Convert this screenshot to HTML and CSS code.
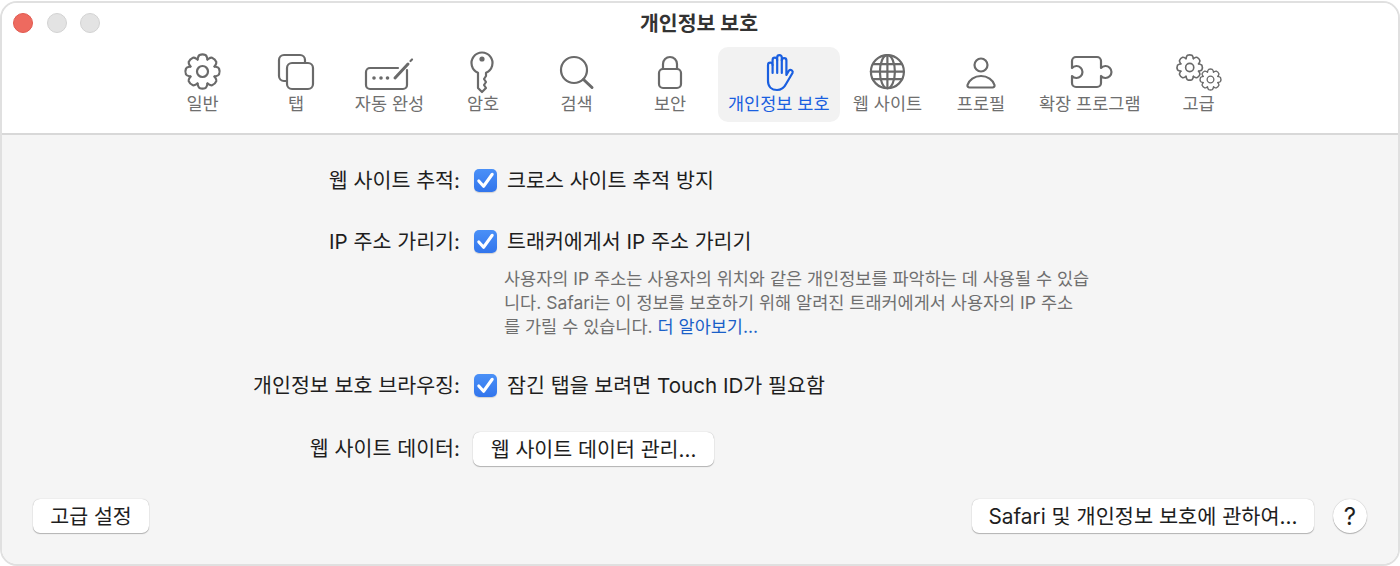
FILE: index.html
```html
<!DOCTYPE html>
<html lang="ko">
<head>
  <meta charset="UTF-8" />
  <meta name="viewport" content="width=device-width, initial-scale=1" />
  <title>개인정보 보호</title>
  <link rel="stylesheet" href="styles.css">
</head>
<body>

  <svg class="svg-defs" width="0" height="0" aria-hidden="true">
    <defs>
      <path id="tooth" d="M-5 -12C-4.5 -14 -4.5 -15.5 -3 -16.5Q0 -17.8 3 -16.5C4.5 -15.5 4.5 -14 5 -12" />
      <g id="gear">
        <use href="#tooth" />
        <use href="#tooth" transform="rotate(45)" />
        <use href="#tooth" transform="rotate(90)" />
        <use href="#tooth" transform="rotate(135)" />
        <use href="#tooth" transform="rotate(180)" />
        <use href="#tooth" transform="rotate(225)" />
        <use href="#tooth" transform="rotate(270)" />
        <use href="#tooth" transform="rotate(315)" />
        <circle r="5.5" />
      </g>
    </defs>
  </svg>

  <div class="window">
    <header class="toolbar">
      <div class="titlebar">
        <div class="lights">
          <span class="light light-red"></span>
          <span class="light"></span>
          <span class="light"></span>
        </div>
        <h1>개인정보 보호</h1>
      </div>

      <nav class="tabs">
        <a class="tab">
          <svg class="icon" viewBox="-30 -22 60 44"><use href="#gear" transform="translate(-.5 -.5)" /></svg>
          <span>일반</span>
        </a>
        <a class="tab">
          <svg class="icon" viewBox="-30 -22 60 44">
            <rect x="-9" y="-9" width="26" height="26" rx="5" />
            <path d="M9 -9V-12a5 5 0 0 0 -5 -5H-12a5 5 0 0 0 -5 5V4a5 5 0 0 0 5 5H-9" />
          </svg>
          <span>탭</span>
        </a>
        <a class="tab">
          <svg class="icon" viewBox="-30 -22 60 44">
            <path d="M8 -4H-20a4 4 0 0 0 -4 4V13a4 4 0 0 0 4 4H13a4 4 0 0 0 4 -4V-2" />
            <path class="thick" d="M5 6L18 -8" />
            <path d="M20.5 -11L22 -12.5" />
            <circle class="dot" cx="-16" cy="6" r="1.8" />
            <circle class="dot" cx="-9" cy="6" r="1.8" />
            <circle class="dot" cx="-2.5" cy="6" r="1.8" />
          </svg>
          <span>자동 완성</span>
        </a>
        <a class="tab">
          <svg class="icon" viewBox="-30 -22 60 44">
            <path d="M-5 .7V16L-1 20L3 16L1 13L3 10L1 7L3 4V.7A10.5 10.5 0 1 0 -5 .7Z" />
            <circle class="dot" cx="-1" cy="-13" r="2.6" />
          </svg>
          <span>암호</span>
        </a>
        <a class="tab">
          <svg class="icon" viewBox="-30 -22 60 44">
            <circle cx="-3" cy="-2" r="13" />
            <path class="thick" d="M6.5 7.5L15 15.5" />
          </svg>
          <span>검색</span>
        </a>
        <a class="tab">
          <svg class="icon" viewBox="-30 -22 60 44">
            <rect x="-11" y="-3" width="22" height="19" rx="4" />
            <path d="M-7 -3V-8a7 7 0 0 1 14 0V-3" />
          </svg>
          <span>보안</span>
        </a>
        <a class="tab tab-wide active">
          <svg class="icon" viewBox="-30 -22 60 44">
            <path d="M-11 -7a2.3 2.3 0 0 1 4.6 0V-12a2.3 2.3 0 0 1 4.6 0V-14.5a2.3 2.3 0 0 1 4.6 0V-11.5a2.3 2.3 0 0 1 4.6 0V3L10 -1.5a2.2 2.2 0 0 1 3.5 2.5L7 12c-2 4 -5 6 -9 6c-5 0 -9 -3 -9 -9Z" />
            <path d="M-6.4 -7V1M-1.8 -12V1M2.8 -12V1" />
          </svg>
          <span>개인정보 보호</span>
        </a>
        <a class="tab">
          <svg class="icon" viewBox="-30 -22 60 44">
            <g transform="translate(-.6 -.3)">
              <circle r="16.5" />
              <ellipse rx="7.5" ry="16.5" />
              <path d="M0 -16.5V16.5M-16.5 0H16.5M-14.5 -7.5H14.5M-14.5 7.5H14.5" />
            </g>
          </svg>
          <span>웹 사이트</span>
        </a>
        <a class="tab">
          <svg class="icon" viewBox="-30 -22 60 44">
            <circle cy="-7" r="6.5" />
            <path d="M-11.5 15.5H11.5a2 2 0 0 0 2 -2.5c-1.5 -5 -7 -9 -13.5 -9s-12 4 -13.5 9a2 2 0 0 0 2 2.5Z" />
          </svg>
          <span>프로필</span>
        </a>
        <a class="tab tab-wide">
          <svg class="icon" viewBox="-30 -22 60 44">
            <path d="M-14 -15H7a4 4 0 0 1 4 4V-4A6 6 0 1 1 11 4V11a4 4 0 0 1 -4 4H-14a4 4 0 0 1 -4 -4V4A6 6 0 1 0 -18 -4V-11a4 4 0 0 1 4 -4Z" />
          </svg>
          <span>확장 프로그램</span>
        </a>
        <a class="tab">
          <svg class="icon" viewBox="-30 -22 60 44">
            <use href="#gear" transform="translate(-9.3 -4.5) scale(.74)" />
            <use href="#gear" transform="translate(11.5 7.5) scale(.61)" />
          </svg>
          <span>고급</span>
        </a>
      </nav>
    </header>

    <main class="content">
      <div class="row">
        <div class="row-label">웹 사이트 추적:</div>
        <label class="check">
          <span class="checkbox"><svg viewBox="0 0 24 24"><path d="M5 12.5L10 18L19 5.5" /></svg></span>
          <span class="check-text">크로스 사이트 추적 방지</span>
        </label>
      </div>

      <div class="row row-ip">
        <div class="row-label">IP 주소 가리기:</div>
        <label class="check">
          <span class="checkbox"><svg viewBox="0 0 24 24"><path d="M5 12.5L10 18L19 5.5" /></svg></span>
          <span class="check-text">트래커에게서 IP 주소 가리기</span>
        </label>
      </div>
      <p class="note">
        사용자의 IP 주소는 사용자의 위치와 같은 개인정보를 파악하는 데 사용될 수 있습<br>
        니다. Safari는 이 정보를 보호하기 위해 알려진 트래커에게서 사용자의 IP 주소<br>
        를 가릴 수 있습니다. <a class="note-link">더 알아보기...</a>
      </p>

      <div class="row row-private">
        <div class="row-label">개인정보 보호 브라우징:</div>
        <label class="check">
          <span class="checkbox"><svg viewBox="0 0 24 24"><path d="M5 12.5L10 18L19 5.5" /></svg></span>
          <span class="check-text">잠긴 탭을 보려면 Touch ID가 필요함</span>
        </label>
      </div>

      <div class="row row-data">
        <div class="row-label">웹 사이트 데이터:</div>
        <button class="btn btn-data" type="button">웹 사이트 데이터 관리...</button>
      </div>

      <div class="footer">
        <button class="btn btn-advanced" type="button">고급 설정</button>
        <div class="footer-right">
          <button class="btn btn-about" type="button">Safari 및 개인정보 보호에 관하여...</button>
          <button class="btn-help" type="button">?</button>
        </div>
      </div>
    </main>
  </div>

</body>
</html>
```

FILE: styles.css
```css
body {
  font-family: Inter, "Noto Sans CJK KR", sans-serif;
  margin: 0;
  background-color: white;
  color: #1e1e1e;
}

.svg-defs {
  position: absolute;
}

.window {
  box-sizing: border-box;
  height: 565px;
  margin-top: 1px;
  border: 2px solid #e0e0e0;
  border-radius: 17px;
  overflow: hidden;
  display: flex;
  flex-direction: column;
}

.toolbar {
  box-sizing: border-box;
  height: 132px;
  background-color: white;
  border-bottom: 2px solid #d8d8d8;
}

.titlebar {
  display: flex;
  align-items: center;
  justify-content: center;
  height: 38px;
  padding-right: 2px;
  position: relative;
}

.titlebar h1 {
  margin: 0;
  font-size: 20.5px;
  font-weight: 700;
  color: #333;
}

.lights {
  position: absolute;
  left: 11px;
  top: 10px;
  display: flex;
  gap: 13.5px;
}

.light {
  box-sizing: border-box;
  width: 20px;
  height: 20px;
  border-radius: 50%;
  background-color: #e3e3e3;
  border: 1px solid #d2d2d2;
}

.light-red {
  background-color: #ee6a5f;
  border-color: #e05a50;
}

.tabs {
  display: flex;
  margin-top: 6px;
  padding-left: 153.75px;
}

.tab {
  flex: none;
  width: 93.5px;
  height: 75px;
  border-radius: 10px;
  color: #6f6f6f;
  font-size: 17.5px;
  line-height: 24px;
  text-align: center;
  white-space: nowrap;
  display: flex;
  flex-direction: column;
  align-items: center;
}

.tab-wide {
  width: 124px;
}

.tab.active {
  width: 122px;
  margin: 0 1px;
  background-color: #f2f2f2;
  color: #1a5fe0;
}

.icon {
  width: 60px;
  height: 44px;
  margin-top: 3px;
  margin-bottom: -2px;
  flex: none;
  fill: none;
  stroke: #6a6a6a;
  stroke-width: 2.2;
  stroke-linecap: round;
  stroke-linejoin: round;
}

.active .icon {
  stroke: currentColor;
}

.icon * {
  vector-effect: non-scaling-stroke;
}

.icon .thick {
  stroke-width: 3;
}

.icon .dot {
  fill: #6a6a6a;
  stroke: none;
}

.content {
  flex: 1;
  background-color: #f5f5f5;
  padding-top: 33px;
}

.row {
  display: grid;
  grid-template-columns: 458px auto;
  grid-template-rows: 24px;
  column-gap: 13px;
  align-items: center;
  justify-content: start;
  height: 24px;
  font-size: 20.6px;
  line-height: 24px;
}

.row-label {
  padding-top: 2px;
  text-align: right;
  white-space: nowrap;
}

.row-ip {
  margin-top: 37px;
}

.row-private {
  margin-top: 34px;
}

.row-data {
  grid-template-rows: 34px;
  height: 34px;
  margin-top: 35px;
}

.row-data .row-label {
  padding-top: 0;
}

.check {
  display: flex;
  align-items: center;
  gap: 10px;
  margin-left: 1px;
  white-space: nowrap;
}

.check-text {
  padding-top: 2px;
}

.checkbox {
  box-sizing: border-box;
  flex: none;
  width: 23px;
  height: 23px;
  border-radius: 5px;
  background: linear-gradient(#4a90f7, #3275ec);
  box-shadow: 0 1px 1px rgba(0,0,0,0.15);
}

.checkbox svg {
  display: block;
  width: 23px;
  height: 23px;
  fill: none;
  stroke: white;
  stroke-width: 3.2;
  stroke-linecap: round;
  stroke-linejoin: round;
}

.note {
  margin: 14px 0 0 502px;
  font-size: 17.5px;
  line-height: 24px;
  color: #6f6f6f;
  white-space: nowrap;
}

.note-link {
  color: #1a5fc8;
}

.btn {
  box-sizing: border-box;
  height: 34px;
  padding: 0 0 2px;
  border: none;
  border-radius: 7px;
  background-color: white;
  box-shadow: 0 0 1px rgba(0,0,0,0.3), 0 1px 1px rgba(0,0,0,0.25);
  font-family: inherit;
  font-size: 20.6px;
  color: #1e1e1e;
  white-space: nowrap;
}

.btn-data {
  width: 241px;
}

.footer {
  display: flex;
  justify-content: space-between;
  margin-top: 33px;
  padding: 0 31px;
}

.btn-advanced {
  width: 116px;
}

.footer-right {
  display: flex;
  gap: 19px;
}

.btn-about {
  width: 342px;
  font-size: 20.8px;
}

.btn-help {
  box-sizing: border-box;
  width: 34px;
  height: 34px;
  padding: 0;
  border: none;
  border-radius: 50%;
  background-color: white;
  box-shadow: 0 0 1px rgba(0,0,0,0.3), 0 1px 1px rgba(0,0,0,0.25);
  font-family: inherit;
  font-size: 24px;
  color: #1e1e1e;
}
```
